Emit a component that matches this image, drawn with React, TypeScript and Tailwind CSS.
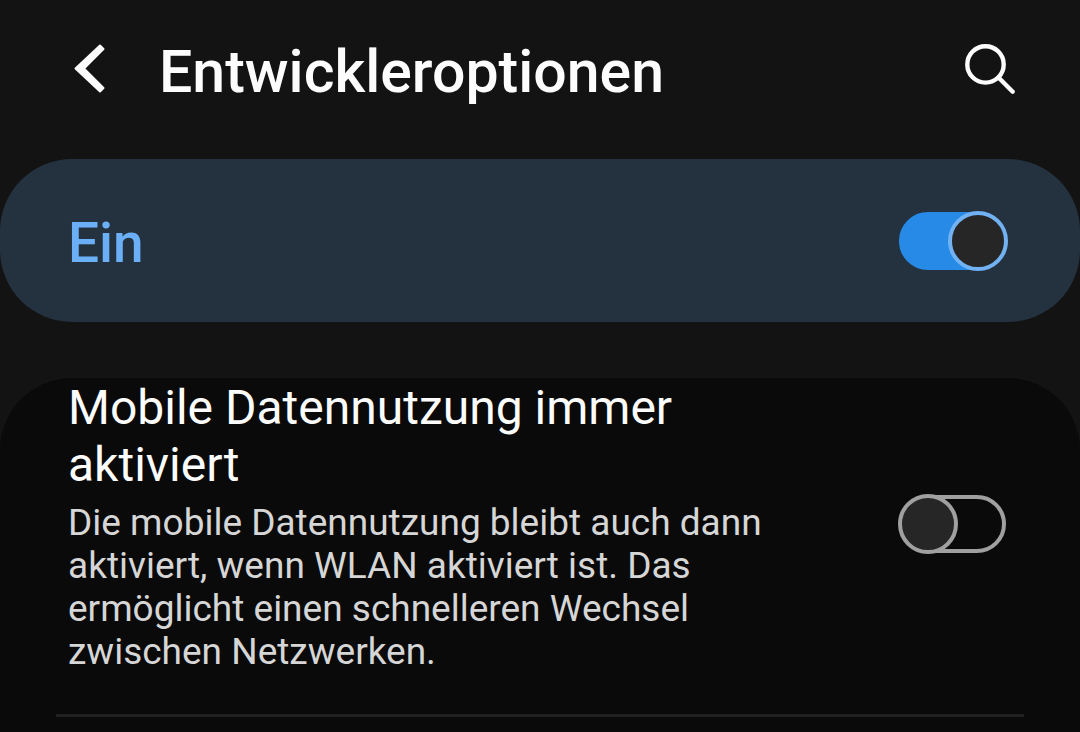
import { useState } from "react";

type SwitchProps = {
  id: string;
  checked: boolean;
  onChange: (value: boolean) => void;
};

function Switch({ id, checked, onChange }: SwitchProps) {
  return (
    <span className="relative flex h-[60px] w-[110px] shrink-0 items-center">
      <input
        id={id}
        type="checkbox"
        role="switch"
        checked={checked}
        onChange={(event) => onChange(event.target.checked)}
        className="peer absolute inset-0 z-10 m-0 cursor-pointer opacity-0"
      />
      <span className="ml-px mr-[2px] h-[58px] grow rounded-full border-4 border-[#a0a0a0] bg-[#0a0a0a] peer-checked:border-[#268ae6] peer-checked:bg-[#268ae6]" />
      <span className="absolute left-0 top-0 size-[60px] rounded-full border-4 border-[#a0a0a0] bg-[#262626] peer-checked:left-auto peer-checked:right-0 peer-checked:border-[#72b2f2]" />
    </span>
  );
}

export default function App() {
  const [enabled, setEnabled] = useState(true);
  const [mobileData, setMobileData] = useState(false);

  return (
    <div className="flex min-h-screen flex-col bg-[#131313] font-['Roboto','Noto_Sans',sans-serif] text-[#fcfcfc]">
      <header className="flex items-center pb-[51px] pl-[68px] pr-[60px] pt-[36px]">
        <button type="button" aria-label="Zurück" className="mr-[43px] flex">
          <svg className="h-[72px] w-[48px]" viewBox="0 0 48 72" fill="currentColor" stroke="currentColor" strokeWidth="2" strokeLinejoin="round">
            <path d="M32 9.5 35.500 13 16 32.500 35.500 52 32 55.500 7.500 32.500Z" />
          </svg>
        </button>
        <h1 className="grow text-[59px] font-medium leading-[72px]">Entwickleroptionen</h1>
        <button type="button" aria-label="Suchen" className="flex">
          <svg className="h-[72px] w-[60px]" viewBox="0 0 60 72" fill="none" stroke="currentColor" strokeWidth="4.4" strokeLinecap="round">
            <circle cx="25.5" cy="28.4" r="18.2" />
            <path d="M39 42 52.700 55.700" />
          </svg>
        </button>
      </header>

      <main className="flex grow flex-col">
        <section className="flex items-center justify-between rounded-[72px] bg-[#24323f] py-[51px] pl-[68px] pr-[72px]">
          <label htmlFor="developer-options" className="pt-[6px] text-[55px] font-medium leading-[55px] text-[#6bb0f7]">
            Ein
          </label>
          <Switch id="developer-options" checked={enabled} onChange={setEnabled} />
        </section>

        <section className="mt-[56px] grow rounded-t-[72px] bg-[#0a0a0a]">
          <div className="flex items-center justify-between gap-[80px] pb-[45px] pl-[68px] pr-[72px] pt-px">
            <div className="max-w-[720px]">
              <label htmlFor="mobile-data" className="block text-[48px] leading-[57px]">
                Mobile Datennutzung immer aktiviert
              </label>
              <p className="-mb-[4px] mt-[8px] text-[37px] leading-[43px] text-[#d6d6d6]">
                Die mobile Datennutzung bleibt auch dann aktiviert, wenn WLAN aktiviert ist. Das ermöglicht einen schnelleren Wechsel zwischen Netzwerken.
              </p>
            </div>
            <Switch id="mobile-data" checked={mobileData} onChange={setMobileData} />
          </div>
          <hr className="mx-[56px] border-t-[3px] border-[#202020]" />
        </section>
      </main>
    </div>
  );
}
